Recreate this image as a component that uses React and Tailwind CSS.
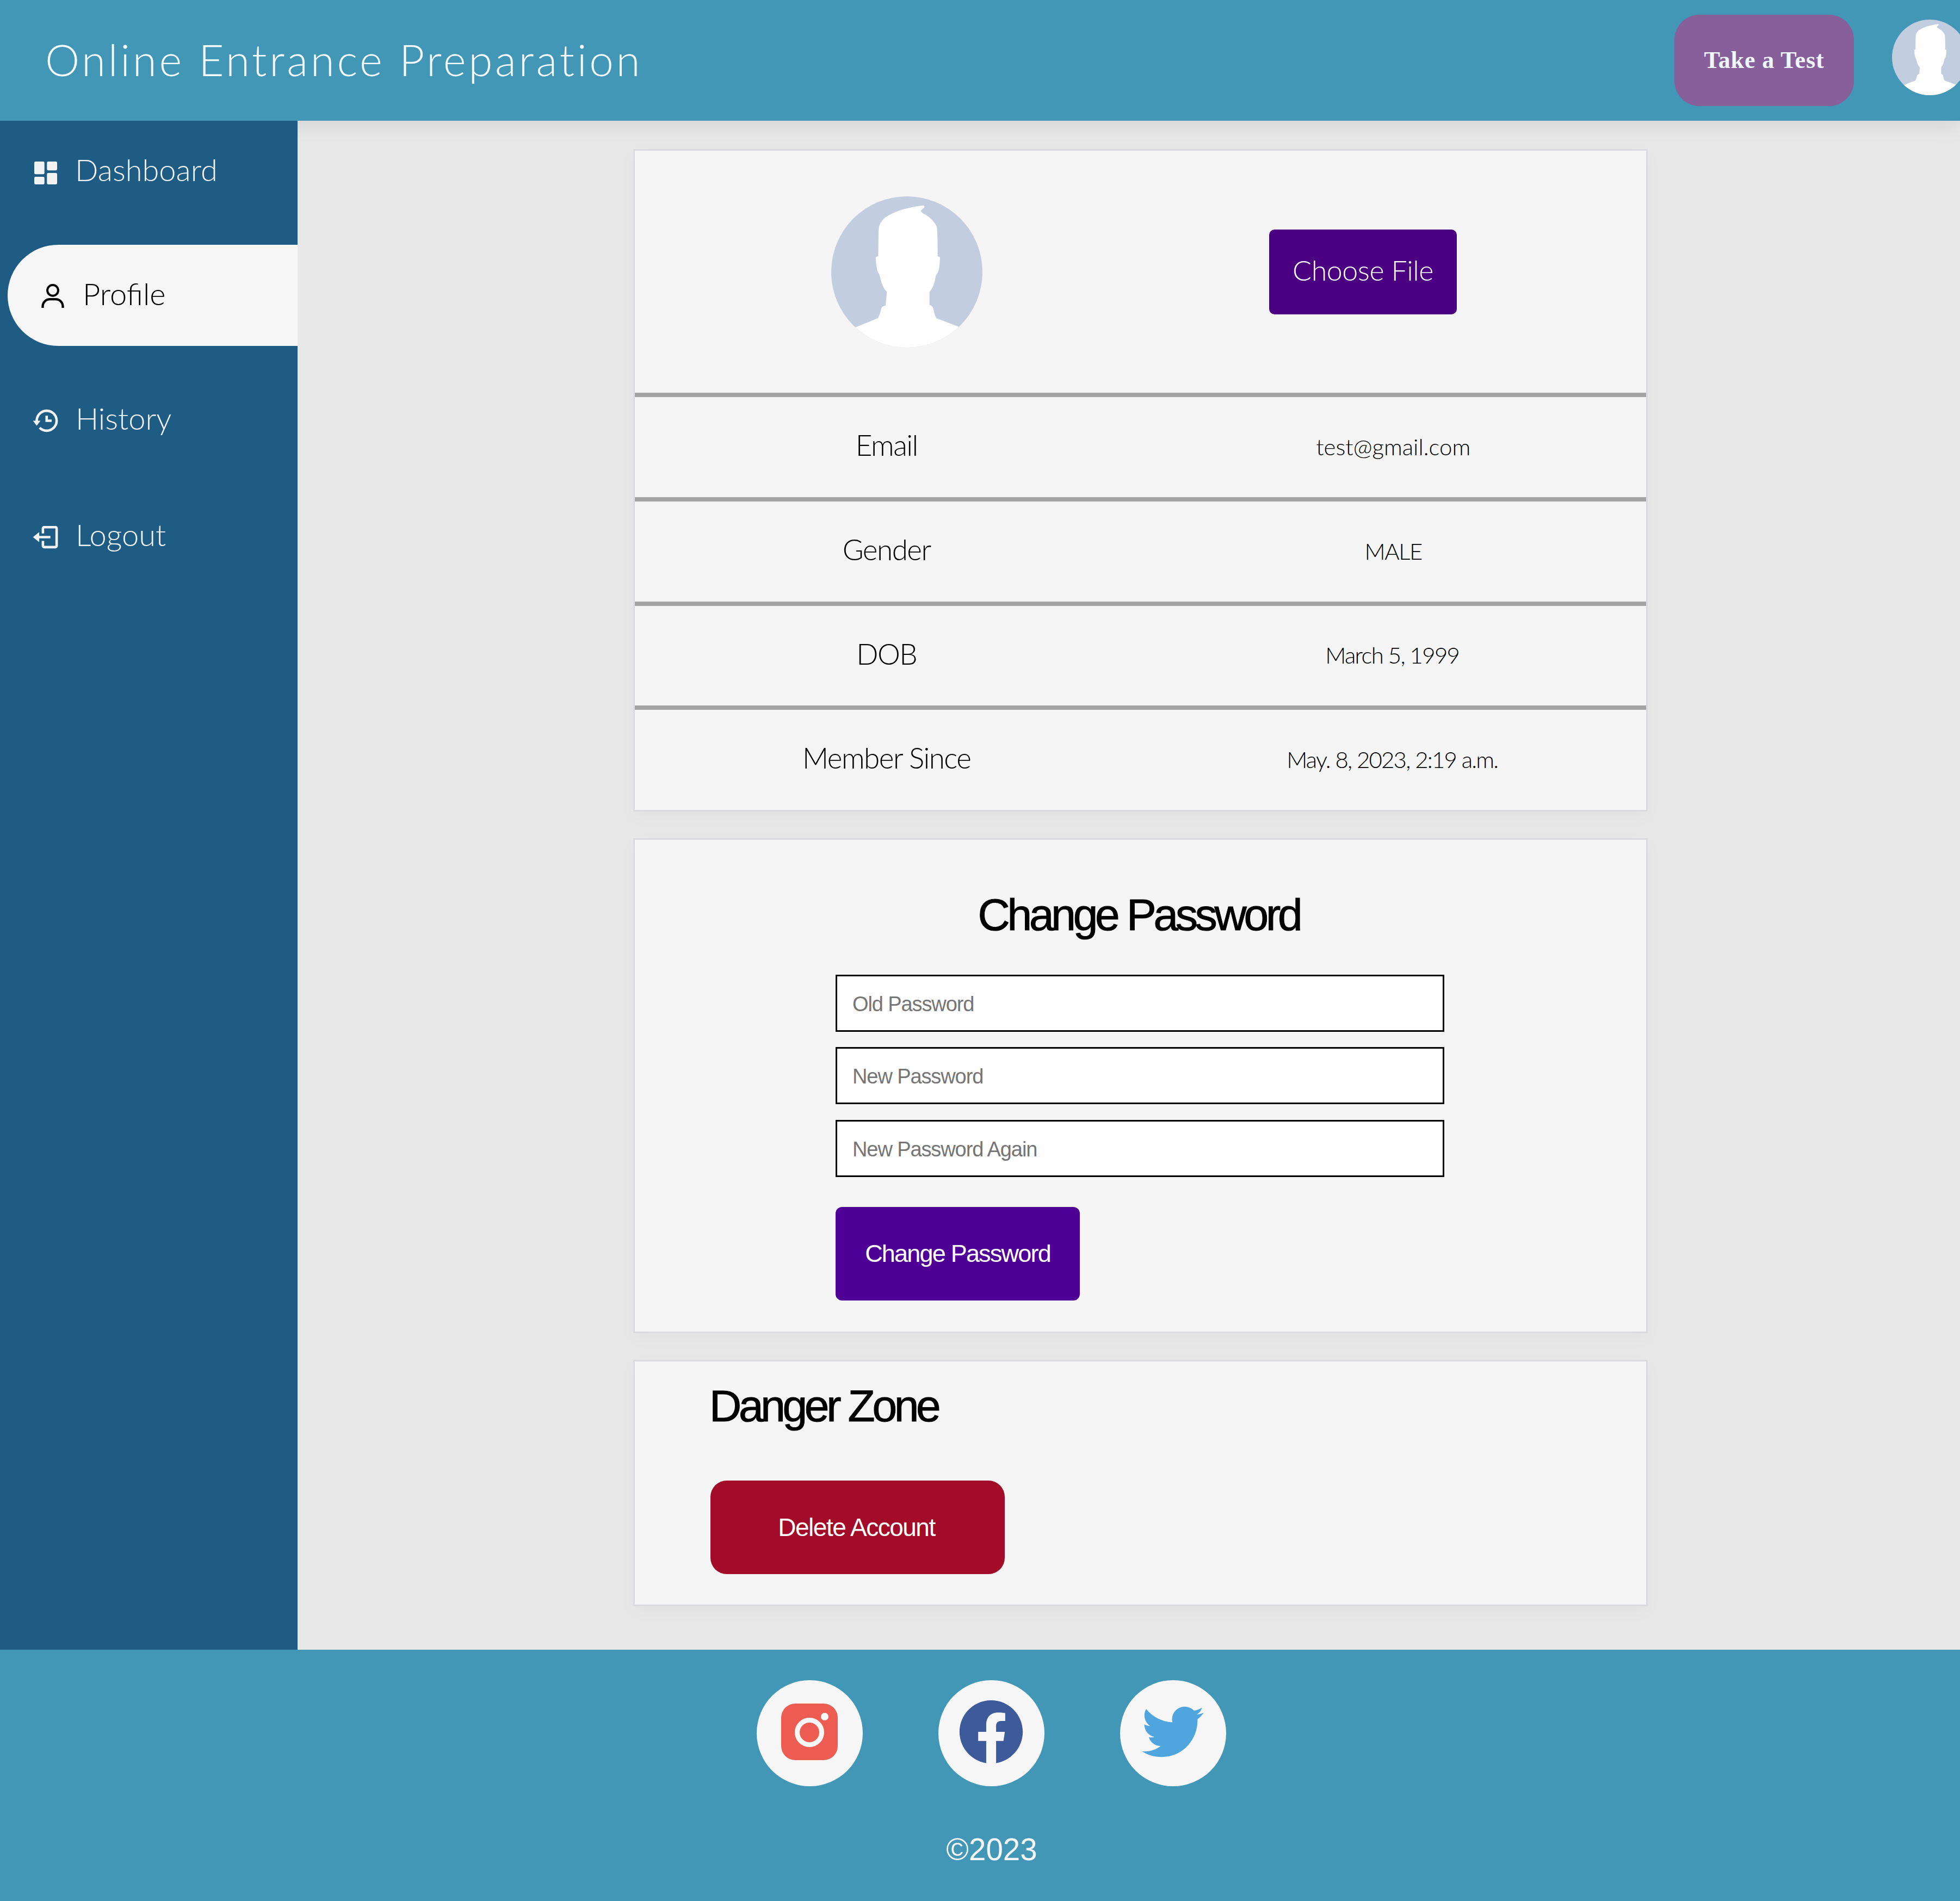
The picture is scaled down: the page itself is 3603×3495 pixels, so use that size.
import React from "react";
import { BiSolidDashboard, BiHistory, BiLogOut } from "react-icons/bi";
import { FaFacebook, FaTwitter } from "react-icons/fa";

function Avatar({ className }) {
  return (
    <div className={"rounded-full overflow-hidden bg-[#c2cde0] shrink-0 " + className}>
      <svg viewBox="143 93 834 834" className="block w-full h-full">
        <path
          fill="#ffffff"
          d="M277 815 L400 765 Q412 745 418 715 Q422 697 443 695 L450 620 Q425 595 415 550 Q412 525 400 510 Q390 480 388 428 L402 423 L404 280 Q405 240 440 210 Q510 160 650 143 Q662 145 655 155 L637 172 Q640 185 665 195 Q710 225 725 260 Q730 280 730 423 L743 428 Q742 490 730 515 L720 530 Q712 590 685 620 L685 692 Q702 695 707 715 Q712 745 722 765 L847 812 L980 812 L980 930 L140 930 L140 815 Z"
        />
      </svg>
    </div>
  );
}

function NavItem({ icon: Icon, label, className, textClass, iconClass }) {
  return (
    <div className={"flex items-center h-[186px] text-[#f2f2f2] " + className}>
      <Icon className={"shrink-0 " + iconClass} />
      <span className={"text-[56px] font-light " + textClass}>{label}</span>
    </div>
  );
}

function Row({ label, value, className, valueClass }) {
  return (
    <div className={"grid grid-cols-2 items-center border-t-[8px] border-[#a3a3a3] text-black " + className}>
      <div className="text-center text-[53px] font-light tracking-[-1.5px] pb-[8px] pr-[4px]">{label}</div>
      <div className={"text-center text-[42px] font-light pb-[2px] " + valueClass}>{value}</div>
    </div>
  );
}

const cardClass =
  "w-[1865px] ml-[617px] bg-[#f5f5f5] border-[3px] border-[#dadadf] shadow-[0_10px_30px_rgba(0,0,0,0.03)]";

function Field({ placeholder, className }) {
  return (
    <input
      type="text"
      placeholder={placeholder}
      className={
        "block w-[1119px] h-[105px] bg-white border-[3px] border-black pl-[28px] pr-[28px] pt-[3px] text-[38px] tracking-[-1.1px] placeholder:text-[#757575] font-['Liberation_Sans',Arial,sans-serif] " +
        className
      }
    />
  );
}

function SocialCircle({ children }) {
  return (
    <div className="w-[195px] h-[195px] pb-[6px] rounded-full bg-[#f6f6f6] flex items-center justify-center">
      {children}
    </div>
  );
}

export default function App() {
  return (
    <div className="w-[3603px] h-[3495px] flex flex-col bg-[#e8e8e8] overflow-hidden font-['Lato',sans-serif]">
      <header className="relative z-10 h-[222px] shrink-0 flex items-center bg-[#4297b6] shadow-[0_6px_40px_rgba(0,0,0,0.1)] overflow-hidden">
        <h1 className="ml-[83px] pb-[4px] text-[80px] font-light text-[#f5fbff] tracking-[4.7px] whitespace-nowrap">
          Online Entrance Preparation
        </h1>
        <button className="ml-auto w-[330px] h-[168px] rounded-[46px] bg-[#875f9a] text-[#f0f8ff] text-[44px] font-bold tracking-[0.9px] font-['Liberation_Serif',serif]">
          Take a Test
        </button>
        <Avatar className="w-[139px] h-[139px] ml-[70px] mr-[-14px] mb-[11px]" />
      </header>

      <div className="flex flex-1 min-h-0">
        <aside className="relative z-20 w-[547px] shrink-0 bg-[#1f5c84]">
          <NavItem
            icon={BiSolidDashboard}
            label="Dashboard"
            className="mt-[3px] pl-[56px]"
            iconClass="w-[56px] h-[56px]"
            textClass="ml-[26px] pb-[12px]"
          />
          <div className="ml-[14px] mt-[39px] h-[186px] rounded-l-[93px] bg-[#f6f6f6] flex items-center pl-[62px] text-black">
            <svg viewBox="78 725 125 133" className="w-[42px] h-[44px] mt-[2px] shrink-0" fill="none" stroke="currentColor">
              <circle cx="140.5" cy="761" r="30" strokeWidth="12" />
              <path strokeWidth="13" d="M84.5 858 V850 A40 40 0 0 1 125 810 H156 A40 40 0 0 1 196.5 850 V858" />
            </svg>
            <span className="ml-[34px] pb-[6px] text-[56px] font-light">Profile</span>
          </div>
          <NavItem
            icon={BiHistory}
            label="History"
            className="mt-[44px] pl-[56px]"
            iconClass="w-[55px] h-[55px]"
            textClass="ml-[28px] pb-[9px]"
          />
          <NavItem
            icon={BiLogOut}
            label="Logout"
            className="mt-[28px] pl-[56px]"
            iconClass="w-[55px] h-[55px]"
            textClass="ml-[28px] pb-[9px]"
          />
        </aside>

        <main className="flex-1 min-w-0 pt-[52px]">
          <section className={cardClass}>
            <div className="h-[445px] flex items-center">
              <Avatar className="w-[278px] h-[278px] ml-[361px]" />
              <button className="ml-[527px] w-[345px] h-[156px] pb-[7px] rounded-[10px] bg-[#4b0082] text-white text-[52px] font-light tracking-[-0.5px]">
                Choose File
              </button>
            </div>
            <Row label="Email" value="test@gmail.com" className="h-[192px]" valueClass="tracking-[0px]" />
            <Row label="Gender" value="MALE" className="h-[192px]" valueClass="tracking-[-1.5px]" />
            <Row label="DOB" value="March 5, 1999" className="h-[191px]" valueClass="tracking-[-1.7px] pr-[4px]" />
            <Row label="Member Since" value="May. 8, 2023, 2:19 a.m." className="h-[192px]" valueClass="tracking-[-1.8px] pr-[4px]" />
          </section>

          <section className={cardClass + " mt-[49px] h-[910px] pt-[91px] font-['Liberation_Sans',Arial,sans-serif]"}>
            <h2 className="text-center pr-[6px] text-[82px] leading-[94px] tracking-[-5.2px] text-black [-webkit-text-stroke:1px_#000]">
              Change Password
            </h2>
            <form className="ml-[369px] mt-[63px]">
              <Field placeholder="Old Password" />
              <Field placeholder="New Password" className="mt-[28px]" />
              <Field placeholder="New Password Again" className="mt-[29px]" />
              <button type="button" className="block mt-[55px] w-[449px] h-[172px] rounded-[12px] bg-[#4e0097] text-white text-[45px] tracking-[-1.8px]">
                Change Password
              </button>
            </form>
          </section>

          <section className={cardClass + " mt-[49px] h-[453px] pt-[35px] pl-[139px] font-['Liberation_Sans',Arial,sans-serif]"}>
            <h2 className="ml-[-2px] text-[82px] leading-[94px] tracking-[-5.3px] text-black [-webkit-text-stroke:1px_#000]">
              Danger Zone
            </h2>
            <button className="block mt-[90px] w-[541px] h-[172px] pr-[4px] rounded-[30px] bg-[#a30c28] text-white text-[46px] tracking-[-1.5px]">
              Delete Account
            </button>
          </section>
        </main>
      </div>

      <footer className="h-[462px] shrink-0 bg-[#4297b6] pt-[56px] pl-[41px] font-['Liberation_Sans',Arial,sans-serif]">
        <div className="flex justify-center gap-[139px]">
          <SocialCircle>
            <svg viewBox="0 0 104 104" className="w-[104px] h-[104px]">
              <rect width="104" height="104" rx="26" fill="#ec5c52" />
              <circle cx="52" cy="53" r="22.5" fill="none" stroke="#f6f6f6" strokeWidth="9" />
              <circle cx="80" cy="24" r="7" fill="#f6f6f6" />
            </svg>
          </SocialCircle>
          <SocialCircle>
            <FaFacebook className="w-[120px] h-[120px] text-[#3d5a9b]" />
          </SocialCircle>
          <SocialCircle>
            <FaTwitter className="w-[114px] h-[114px] text-[#4fa6de]" />
          </SocialCircle>
        </div>
        <p className="mt-[75px] pl-[2px] text-center text-[56.5px] text-[#f5f5f5]">©2023</p>
      </footer>
    </div>
  );
}
